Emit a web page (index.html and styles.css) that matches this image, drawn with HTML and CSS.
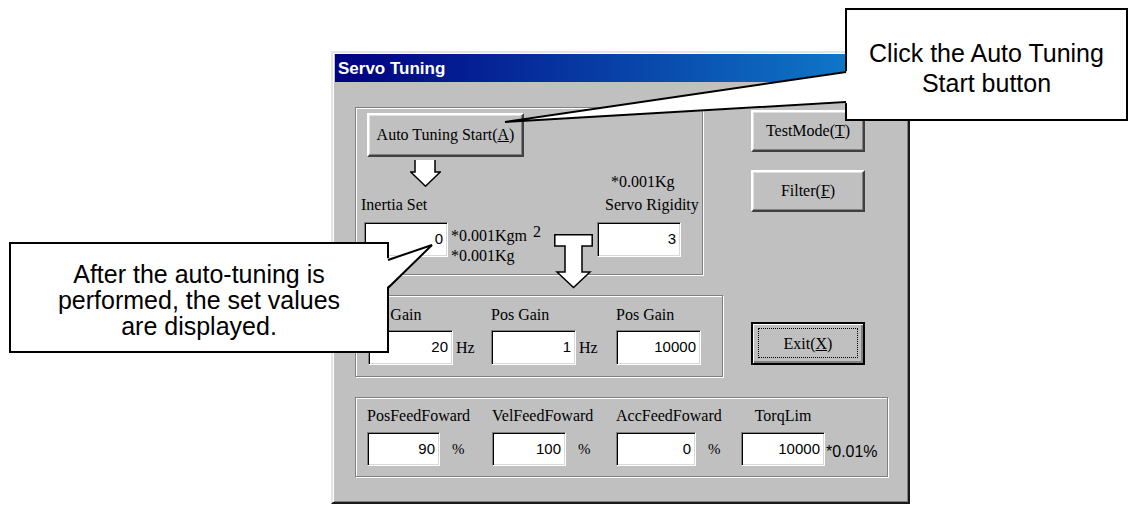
FILE: index.html
```html
<!DOCTYPE html>
<html lang="en">
<head>
    <meta charset="UTF-8">
    <meta name="viewport" content="width=device-width, initial-scale=1.0">
    <title>Servo Tuning</title>
    <link rel="stylesheet" href="styles.css">
</head>
<body>
    <!-- Dialog window -->
    <div class="window">
        <div class="titlebar">Servo Tuning</div>
        <div class="client">
            <div class="top">
                <div class="left">
                    <!-- Auto tuning group -->
                    <div class="group g1">
                        <button class="btn btn-auto">Auto Tuning Start(<u>A</u>)</button>
                        <div class="g1-body">
                            <div class="g1-left">
                                <svg class="arrow-down" width="31" height="27" viewBox="0 0 31 27">
                                    <path d="M5 0 V12 H0.8 L15.5 26.2 L30.2 12 H25 V0" fill="#fff" stroke="#000" stroke-width="1.5"/>
                                </svg>
                                <div class="lbl lbl-inertia">Inertia Set</div>
                                <div class="inertia-row">
                                    <div class="edit e-g1">0</div>
                                    <div class="units">*0.001Kgm <span class="sup">2</span><br>*0.001Kg</div>
                                </div>
                            </div>
                            <div class="g1-right">
                                <div class="lbl lbl-kg">*0.001Kg</div>
                                <div class="lbl lbl-rigid">Servo Rigidity</div>
                                <div class="edit e-g1 e-rigid">3</div>
                            </div>
                        </div>
                        <svg class="arrow-t" width="40" height="56" viewBox="0 0 40 56">
                            <path d="M0.8 0.8 H38.2 V12 H28 V38 H36 L19.5 53.5 L3 38 H11 V12 H0.8 Z" fill="#fff" stroke="#000" stroke-width="1.5"/>
                        </svg>
                    </div>

                    <!-- Gain group -->
                    <div class="group g2">
                        <div class="col g2-c1">
                            <div class="lbl lbl-vel">Vel Gain</div>
                            <div class="inrow"><div class="edit e-g2">20</div><span class="unit">Hz</span></div>
                        </div>
                        <div class="col g2-c2">
                            <div class="lbl">Pos Gain</div>
                            <div class="inrow"><div class="edit e-g2">1</div><span class="unit">Hz</span></div>
                        </div>
                        <div class="col">
                            <div class="lbl">Pos Gain</div>
                            <div class="inrow"><div class="edit e-g2">10000</div></div>
                        </div>
                    </div>
                </div>

                <div class="side">
                    <button class="btn btn-side">TestMode(<u>T</u>)</button>
                    <button class="btn btn-side btn-filter">Filter(<u>F</u>)</button>
                    <button class="btn btn-side btn-exit">Exit(<u>X</u>)</button>
                </div>
            </div>

            <!-- Feed forward group -->
            <div class="group g3">
                <div class="col g3-c1">
                    <div class="lbl">PosFeedFoward</div>
                    <div class="inrow"><div class="edit e-g3 w73">90</div><span class="pct">%</span></div>
                </div>
                <div class="col g3-c2">
                    <div class="lbl">VelFeedFoward</div>
                    <div class="inrow"><div class="edit e-g3 w74">100</div><span class="pct">%</span></div>
                </div>
                <div class="col g3-c3">
                    <div class="lbl">AccFeedFoward</div>
                    <div class="inrow"><div class="edit e-g3 w80">0</div><span class="pct">%</span></div>
                </div>
                <div class="col">
                    <div class="lbl lbl-torq">TorqLim</div>
                    <div class="inrow"><div class="edit e-g3 w84">10000</div><span class="scale">*0.01%</span></div>
                </div>
            </div>
        </div>
    </div>

    <!-- Callouts -->
    <div class="callout callout-top">Click the Auto Tuning<br>Start button</div>
    <div class="callout callout-left">After the auto-tuning is<br>performed, the set values<br>are displayed.</div>
    <svg class="tails" width="1132" height="505" viewBox="0 0 1132 505">
        <polygon points="848,71 505,122 848,103" fill="#fff"/>
        <path d="M846 72 L505 122 L846 102" fill="none" stroke="#000" stroke-width="2"/>
        <polygon points="385,259 432,245 385,289" fill="#fff"/>
        <path d="M388 260 L432 245 L388 288" fill="none" stroke="#000" stroke-width="2"/>
    </svg>
</body>
</html>
```

FILE: styles.css
```css
* {
    box-sizing: border-box;
}

body {
    margin: 0;
    width: 1132px;
    height: 505px;
    overflow: hidden;
    position: relative;
    background-color: #fff;
    font-family: "Liberation Serif", "Times New Roman", serif;
    font-size: 16px;
    color: #000;
}

/* Window frame */
.window {
    margin: 51px 0 0 331px;
    width: 579px;
    height: 453px;
    padding: 1px 2px;
    background-color: #c0c0c0;
    border: 2px solid;
    border-color: #e4e4e4 #1a1a1a #1a1a1a #e4e4e4;
    box-shadow: inset 1px 1px 0 #fff, inset -1px -1px 0 #808080;
}

.titlebar {
    height: 28px;
    padding: 4px 0 0 3px;
    background: linear-gradient(to right, #000080, #1084d0);
    color: #fff;
    font-family: "Liberation Sans", Arial, sans-serif;
    font-weight: bold;
    font-size: 17px;
    line-height: 22px;
}

.client {
    padding: 25px 0 0 20px;
}

.top {
    display: flex;
    align-items: flex-start;
}

.left {
    width: 368px;
}

/* Etched group boxes */
.group {
    position: relative;
    border: 1px solid #808080;
    box-shadow: inset 1px 1px 0 #fff, 1px 1px 0 #fff;
}

.lbl {
    line-height: 18px;
    white-space: nowrap;
}

/* Sunken edit fields */
.edit {
    display: flex;
    align-items: center;
    justify-content: flex-end;
    padding: 0 4px 2px 0;
    background-color: #fff;
    border: 1px solid;
    border-color: #808080 #fff #fff #808080;
    box-shadow: inset 1px 1px 0 #000, inset -1px -1px 0 #d8d8d8;
    font-family: "Liberation Sans", Arial, sans-serif;
    font-size: 15px;
}

/* Raised buttons */
.btn {
    position: relative;
    display: block;
    padding: 0;
    background-color: #c0c0c0;
    border: 2px solid;
    border-color: #fff #404040 #404040 #fff;
    box-shadow: inset -1px -1px 0 #808080, inset 1px 1px 0 #dfdfdf;
    font-family: "Liberation Serif", "Times New Roman", serif;
    font-size: 16px;
    color: #000;
}

/* Group 1 */
.g1 {
    width: 348px;
    height: 168px;
}

.btn-auto {
    width: 157px;
    height: 44px;
    margin: 5px 0 0 11px;
}

.g1-body {
    display: flex;
}

.g1-left {
    width: 241px;
}

.arrow-down {
    display: block;
    margin: 3px 0 0 54px;
}

.lbl-inertia {
    margin: 9px 0 0 5px;
}

.inertia-row {
    display: flex;
    margin: 8px 0 0 8px;
}

.e-g1 {
    width: 84px;
    height: 35px;
}

.units {
    margin-left: 3px;
    line-height: 20px;
    white-space: nowrap;
}

.sup {
    vertical-align: 4px;
    margin-left: 2px;
}

.lbl-kg {
    margin: 16px 0 0 14px;
}

.lbl-rigid {
    margin: 5px 0 0 8px;
}

.e-rigid {
    margin-top: 8px;
}

.arrow-t {
    position: absolute;
    left: 198px;
    top: 126px;
}

/* Group 2 */
.g2 {
    display: flex;
    width: 368px;
    height: 82px;
    margin-top: 20px;
    padding: 10px 0 0 12px;
}

.g2-c1 {
    width: 123px;
}

.g2-c2 {
    width: 125px;
}

.lbl-vel {
    margin-left: -3px;
}

.inrow {
    display: flex;
    align-items: center;
    margin-top: 6px;
}

.e-g2 {
    width: 85px;
    height: 35px;
}

.unit {
    margin-left: 3px;
}

/* Right hand buttons */
.side {
    display: flex;
    flex-direction: column;
    margin-left: 28px;
    padding-top: 3px;
}

.btn-side {
    width: 114px;
    height: 42px;
}

.btn-filter {
    margin-top: 18px;
}

.btn-exit {
    height: 43px;
    margin-top: 110px;
    border-color: #000;
    box-shadow: inset 1px 1px 0 #fff, inset -2px -2px 0 #808080;
}

.btn-exit::after {
    content: "";
    position: absolute;
    top: 4px;
    left: 5px;
    right: 5px;
    bottom: 5px;
    border: 1px dotted #000;
}

/* Group 3 */
.g3 {
    display: flex;
    width: 533px;
    height: 80px;
    margin-top: 20px;
    padding: 9px 0 0 11px;
}

.g3 .inrow {
    margin-top: 7px;
}

.g3-c1 {
    width: 125px;
}

.g3-c2 {
    width: 124px;
}

.g3-c3 {
    width: 125px;
}

.e-g3 {
    height: 34px;
}

.w73 { width: 73px; }
.w74 { width: 74px; }
.w80 { width: 80px; }
.w84 { width: 84px; }

.pct {
    margin-left: 12px;
    font-size: 15px;
}

.lbl-torq {
    width: 84px;
    text-align: center;
}

.scale {
    align-self: flex-end;
    margin: 0 0 5px 1px;
    font-family: "Liberation Sans", Arial, sans-serif;
    font-size: 16px;
}

/* Callouts */
.callout {
    position: absolute;
    background-color: #fff;
    border: 2px solid #000;
    font-family: "Liberation Sans", Arial, sans-serif;
    text-align: center;
    white-space: nowrap;
}

.callout-top {
    left: 845px;
    top: 8px;
    width: 283px;
    height: 113px;
    padding-top: 28px;
    font-size: 25px;
    line-height: 30px;
}

.callout-left {
    left: 9px;
    top: 242px;
    width: 380px;
    height: 111px;
    padding-top: 17px;
    font-size: 25px;
    line-height: 26px;
}

.tails {
    position: absolute;
    left: 0;
    top: 0;
    pointer-events: none;
}
```
